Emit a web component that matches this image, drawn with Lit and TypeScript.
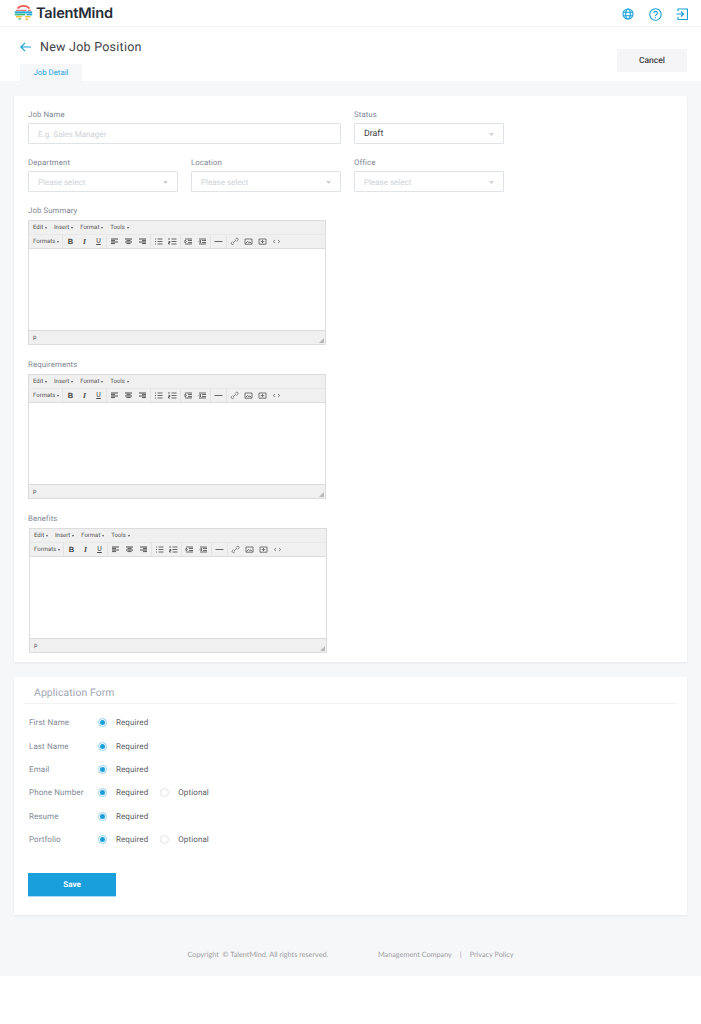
import { LitElement, html, css, svg } from "lit";
import { customElement, property } from "lit/decorators.js";

const caret = html`<svg class="caret" width="5" height="3" viewBox="0 0 5 3"><path d="M0 0h5L2.500 3z" fill="#cdd0d4"/></svg>`;

const lines = (ds: string[], w = 1) => html`<svg class="ti" width="9" height="9" viewBox="0 0 9 9">${ds.map(d => svg`<path d=${d} stroke="#666" stroke-width=${w} fill="none"/>`)}</svg>`;

@customElement("rich-editor")
class RichEditor extends LitElement {
  static styles = css`
    :host { display: block; width: 298px; height: 125px; box-sizing: border-box; border: 1px solid #dcdcdc; background: #f0f0f0; font-family: Roboto, sans-serif; color: #555; }
    .menu { height: 13px; display: flex; align-items: center; gap: 6.800px; padding-left: 4px; border-bottom: 1px solid #e8e8e8; font-size: 6px; }
    .menu span, .fmt { display: inline-flex; align-items: center; gap: 2px; }
    .mini { border-left: 1.500px solid transparent; border-right: 1.500px solid transparent; border-top: 2px solid #555; }
    .bar { height: 14px; display: flex; align-items: center; padding-left: 4px; font-size: 6px; border-bottom: 1px solid #dcdcdc; box-sizing: border-box; }
    .fmt { width: 29px; }
    .grp { display: flex; align-items: center; gap: 5px; padding: 0 3px; border-left: 1px solid #e3e3e3; height: 13px; }
    .t { width: 9px; text-align: center; font-size: 7.500px; line-height: 9px; color: #444; }
    .b { font-weight: 700; font-family: "Liberation Sans", sans-serif; }
    .i { font-style: italic; font-family: "Liberation Serif", serif; font-weight: 700; }
    .u { text-decoration: underline; font-size: 7px; }
    .ti { display: block; }
    .content { height: 82px; background: #fff; border-bottom: 1px solid #dcdcdc; box-sizing: border-box; }
    .status { height: 13px; display: flex; align-items: center; justify-content: space-between; padding: 0 1px 0 4px; font-size: 6px; }
    .grip { display: block; align-self: flex-end; margin-bottom: 1px; }
  `;
  render() {
    const L = ["M1 2h7", "M1 3.500h4", "M1 5h7", "M1 6.500h4"];
    const C = ["M1 2h7", "M2.500 3.500h4", "M1 5h7", "M2.500 6.500h4"];
    const R = ["M1 2h7", "M4 3.500h4", "M1 5h7", "M4 6.500h4"];
    const UL = ["M1 2h1", "M3.500 2h5", "M1 4.500h1", "M3.500 4.500h5", "M1 7h1", "M3.500 7h5"];
    const OL = ["M1 1v2", "M3.500 2h5", "M.500 4.500h1.500v1H.500v1.500h1.500", "M3.500 4.500h5", "M3.500 7h5"];
    const IN = ["M1 2h7", "M4 3.500h4", "M4 5.500h4", "M1 7h7", "M1 3l1.500 1.500L1 6z"];
    const OUT = ["M1 2h7", "M4 3.500h4", "M4 5.500h4", "M1 7h7", "M2.500 3L1 4.500 2.500 6z"];
    return html`
      <div class="menu">
        <span>Edit<i class="mini"></i></span><span>Insert<i class="mini"></i></span><span>Format<i class="mini"></i></span><span>Tools<i class="mini"></i></span>
      </div>
      <div class="bar">
        <span class="fmt">Formats<i class="mini"></i></span>
        <div class="grp"><span class="t b">B</span><span class="t i">I</span><span class="t u">U</span></div>
        <div class="grp">${lines(L, 1.2)}${lines(C, 1.2)}${lines(R, 1.2)}</div>
        <div class="grp">${lines(UL)}${lines(OL)}</div>
        <div class="grp">${lines(IN)}${lines(OUT)}</div>
        <div class="grp">${lines(["M.500 4.500h8"])}</div>
        <div class="grp">
          ${lines(["M3 6l3-3", "M5 2.500L6 1.500a1.200 1.200 0 0 1 1.700 1.700L6.500 4.500", "M2.500 4.500L1.500 5.500a1.200 1.200 0 0 0 1.700 1.700L4 6.500"], .8)}
          ${lines(["M1 2h7v5.200H1z", "M1.500 6.500l2-2 1.500 1.200 1-.8 1.500 1.600"], .9)}
          ${lines(["M1 2h7v5.200H1z", "M2.800 4.600h3.400", "M4.500 3v3.200"], .9)}
          ${lines(["M3 3L1.300 4.500 3 6", "M6 3l1.700 1.500L6 6"], .8)}
        </div>
      </div>
      <div class="content"></div>
      <div class="status"><span>p</span>
        <svg class="grip" width="5" height="5" viewBox="0 0 5 5"><path d="M5 0v5H0z" fill="#b8b8b8"/></svg>
      </div>`;
  }
}

@customElement("radio-opt")
class RadioOpt extends LitElement {
  @property({ type: Boolean }) on = false;
  @property() label = "";
  static styles = css`
    :host { display: inline-flex; align-items: center; gap: 9px; font-size: 8px; color: #5d6066; font-family: Roboto, sans-serif; letter-spacing: .1px; }
    .dot { width: 9px; height: 9px; box-sizing: border-box; border-radius: 50%; border: 1px solid #dfe2e5; background: #fff; display: flex; align-items: center; justify-content: center; }
    .dot.on { border-color: #8fd0f0; }
    .dot.on::after { content: ""; width: 5px; height: 5px; border-radius: 50%; background: #189fdc; }
  `;
  render() {
    return html`<span class="dot ${this.on ? "on" : ""}"></span><span>${this.label}</span>`;
  }
}

@customElement("app-root")
export class AppRoot extends LitElement {
  static styles = css`
    :host { display: block; width: 701px; height: 1024px; background: #fff; font-family: Roboto, sans-serif; overflow: hidden; text-rendering: geometricPrecision; }
    .top { height: 26px; border-bottom: 1px solid #f3f4f6; display: flex; align-items: center; padding: 0 14px; box-sizing: content-box; }
    .logo { display: flex; align-items: center; gap: 3px; }
    .brand { font-family: Inter, Roboto, sans-serif; font-weight: 600; font-size: 14.600px; color: #252d38; letter-spacing: -.2px; }
    .icons { margin-left: auto; display: flex; align-items: center; gap: 14.500px; margin-right: -1px; padding-top: 2px; }
    .head { height: 54px; display: flex; position: relative; padding: 0 14px 0 20px; }
    .head-left { display: flex; flex-direction: column; justify-content: flex-end; }
    .title { display: flex; align-items: center; gap: 9px; font-size: 12.500px; font-weight: 400; color: #3f4248; letter-spacing: .25px; height: 34px; }
    .tab { width: 62px; height: 17px; background: #f6f7f9; color: #26a3df; font-size: 7.800px; font-weight: 400; display: flex; align-items: center; justify-content: center; }
    .cancel { margin-left: auto; margin-top: 22px; width: 70px; height: 23px; background: #f5f5f7; display: flex; align-items: center; justify-content: center; font-size: 8.500px; font-weight: 500; color: #3f4247; }
    .body { background: #f6f7f9; height: 895px; padding: 15px 14px 0; box-sizing: border-box; display: flex; flex-direction: column; }
    .card { background: #fff; box-shadow: 0 1px 2px rgba(30,40,60,.08); }
    .c1 { height: 566px; padding: 14px 14px 0; box-sizing: border-box; margin-bottom: 15px; }
    .row { display: flex; gap: 13px; margin-bottom: 14px; }
    .field { display: flex; flex-direction: column; gap: 4px; }
    label, .lbl { font-size: 7.800px; line-height: 9px; color: #7f8896; letter-spacing: .1px; }
    .w313 { width: 313px; } .w150 { width: 150px; }
    .input { height: 21px; border: 1px solid #dfe2e6; border-radius: 1px; box-sizing: border-box; padding: 1px 9px 0; display: flex; align-items: center; justify-content: space-between; font-size: 8px; color: #cfd2d6; background: #fff; }
    .input.val { color: #3d4046; font-size: 8.800px; }
    .caret { display: block; }
    .ed { display: flex; flex-direction: column; gap: 4px; margin-bottom: 15px; }
    .ed label { line-height: 10px; }
    .shift { margin-left: 1px; }
    .c2 { height: 238px; padding: 0 10px 0 14px; box-sizing: border-box; }
    .c2 h2 { margin: 0 0 0 -4px; padding: 9px 0 0 10px; height: 27px; box-sizing: border-box; font-size: 10.400px; line-height: 13px; font-weight: 400; color: #a2a6b2; border-bottom: 1px solid #f1f2f4; letter-spacing: .1px; }
    .form { display: flex; flex-direction: column; padding: 7px 0 0 1px; }
    .fr { display: flex; align-items: center; height: 23.400px; }
    .fr .lbl { width: 69px; font-size: 8px; }
    .opts { display: flex; gap: 12px; }
    .save { margin-top: 22px; width: 88px; height: 23px; background: #189fdc; color: #fff; font-size: 8px; font-weight: 700; display: flex; align-items: center; justify-content: center; border-bottom: 1px solid #a9dcf4; box-sizing: content-box; }
    .foot { margin-top: 34px; margin-left: 173.500px; display: flex; align-items: center; font-family: Lato, sans-serif; font-size: 7.250px; color: #9b9da1; line-height: 12px; }
    .foot .copy { width: 190.500px; }
    .foot .sep { margin: 0 8px; }
  `;

  rows: [string, boolean][] = [["First Name", false], ["Last Name", false], ["Email", false], ["Phone Number", true], ["Resume", false], ["Portfolio", true]];

  render() {
    return html`
      <div class="top">
        <div class="logo">
          <svg width="19" height="18" viewBox="0 0 19 18" fill="none">
            <path d="M3.500 4.500C5 2.700 7.200 1.800 9.500 1.800s4.500.9 6 2.700" stroke="#ee5a52" stroke-width="1.800"/>
            <path d="M2 6.300h10.500" stroke="#ee5a52" stroke-width="1"/>
            <path d="M14 6.300h3" stroke="#f08a5d" stroke-width="1.400"/>
            <path d="M.8 8.300h17.400" stroke="#29a8e0" stroke-width="2"/>
            <path d="M.8 10.500h10.500" stroke="#3cb878" stroke-width="1.800"/>
            <path d="M12.500 10.500h5.700" stroke="#29a8e0" stroke-width="1.800"/>
            <path d="M2 12.700h6M11 12.700h5.500" stroke="#f5c33b" stroke-width="1.500"/>
            <path d="M4.500 15h2.500" stroke="#3cb878" stroke-width="1.300"/>
            <path d="M11.500 15.300h2.500" stroke="#f0b03e" stroke-width="1.300"/>
          </svg>
          <span class="brand">TalentMind</span>
        </div>
        <div class="icons">
          <svg width="12" height="12" viewBox="0 0 12 12" fill="none" stroke="#189fdc" stroke-width="1.100">
            <circle cx="6" cy="6" r="5"/><ellipse cx="6" cy="6" rx="2.300" ry="5"/><path d="M1 4.200h10M1 7.800h10"/>
          </svg>
          <svg width="13" height="13" viewBox="0 0 13 13" fill="none" stroke="#189fdc" stroke-width="1.100">
            <circle cx="6.500" cy="6.500" r="5.700"/><path d="M4.800 5.100c0-1 .8-1.700 1.800-1.700s1.800.7 1.800 1.600c0 1.500-1.900 1.400-1.900 3"/><path d="M6.500 9.200v1"/>
          </svg>
          <svg width="12" height="12" viewBox="0 0 12 12" fill="none" stroke="#189fdc" stroke-width="1.200">
            <path d="M2 3V1h9.500v10.500H2V9"/><path d="M.5 6h6.500M5 3.500L7.500 6 5 8.500"/>
          </svg>
        </div>
      </div>
      <div class="head">
        <div class="head-left">
          <div class="title">
            <svg width="11" height="10" viewBox="0 0 11 10" fill="none" stroke="#189fdc" stroke-width="1.200"><path d="M11 5H1M5 .8L.9 5 5 9.200"/></svg>
            <span>New Job Position</span>
          </div>
          <div class="tab">Job Detail</div>
        </div>
        <div class="cancel">Cancel</div>
      </div>
      <div class="body">
        <div class="card c1">
          <div class="row">
            <div class="field w313"><label>Job Name</label><div class="input">E.g. Sales Manager</div></div>
            <div class="field w150"><label>Status</label><div class="input val">Draft${caret}</div></div>
          </div>
          <div class="row">
            <div class="field w150"><label>Department</label><div class="input">Please select${caret}</div></div>
            <div class="field w150"><label>Location</label><div class="input">Please select${caret}</div></div>
            <div class="field w150"><label>Office</label><div class="input">Please select${caret}</div></div>
          </div>
          <div class="ed"><label>Job Summary</label><rich-editor></rich-editor></div>
          <div class="ed"><label>Requirements</label><rich-editor></rich-editor></div>
          <div class="ed"><label>Benefits</label><rich-editor class="shift"></rich-editor></div>
        </div>
        <div class="card c2">
          <h2>Application Form</h2>
          <div class="form">
            ${this.rows.map(([name, opt]) => html`
              <div class="fr">
                <span class="lbl">${name}</span>
                <div class="opts">
                  <radio-opt on label="Required"></radio-opt>
                  ${opt ? html`<radio-opt label="Optional"></radio-opt>` : ""}
                </div>
              </div>`)}
          </div>
          <div class="save">Save</div>
        </div>
        <div class="foot">
          <span class="copy">Copyright &nbsp;© TalentMind. All rights reserved.</span>
          <span>Management Company</span><span class="sep">|</span><span>Privacy Policy</span>
        </div>
      </div>`;
  }
}
